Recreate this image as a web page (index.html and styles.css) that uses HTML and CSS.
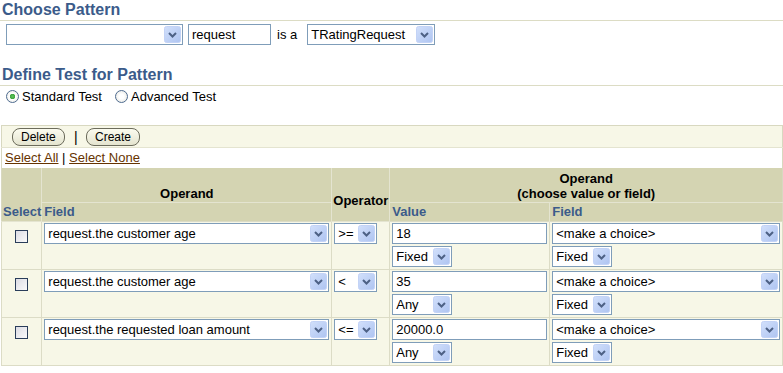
FILE: index.html
```html
<!DOCTYPE html>
<html lang="en">
<head>
    <meta charset="UTF-8">
    <title>Choose Pattern</title>
    <link rel="stylesheet" href="styles.css">
</head>
<body>
    <h2 class="section-title">Choose Pattern</h2>
    <div class="pattern-row">
        <select class="ctl sel-pattern"><option></option></select>
        <input class="ctl inp-var" type="text" value="request">
        <span class="is-a">is a</span>
        <select class="ctl sel-type"><option>TRatingRequest</option></select>
    </div>

    <h2 class="section-title second">Define Test for Pattern</h2>
    <div class="radio-row">
        <label><input type="radio" name="test" checked> Standard Test</label>
        <label><input type="radio" name="test"> Advanced Test</label>
    </div>

    <table class="test-table">
        <tr class="btn-row">
            <td colspan="5">
                <button class="pill">Delete</button>
                <span class="sep">|</span>
                <button class="pill">Create</button>
            </td>
        </tr>
        <tr class="link-row">
            <td colspan="5"><a href="#">Select All</a> | <a href="#">Select None</a></td>
        </tr>
        <tr class="head-top">
            <th rowspan="2" class="col-select blue bottom">Select</th>
            <th class="col-field">Operand</th>
            <th rowspan="2" class="col-op">Operator</th>
            <th colspan="2">Operand<br>(choose value or field)</th>
        </tr>
        <tr class="head-sub">
            <th class="blue left">Field</th>
            <th class="blue left col-value">Value</th>
            <th class="blue left">Field</th>
        </tr>

        <tr class="data-row">
            <td class="center"><input type="checkbox" class="chk"></td>
            <td><select class="ctl w-field"><option>request.the customer age</option></select></td>
            <td><select class="ctl w-op"><option>&gt;=</option></select></td>
            <td>
                <input class="ctl w-value" type="text" value="18">
                <select class="ctl w-kind"><option>Fixed</option></select>
            </td>
            <td>
                <select class="ctl w-choice"><option>&lt;make a choice&gt;</option></select>
                <select class="ctl w-kind"><option>Fixed</option></select>
            </td>
        </tr>
        <tr class="data-row">
            <td class="center"><input type="checkbox" class="chk"></td>
            <td><select class="ctl w-field"><option>request.the customer age</option></select></td>
            <td><select class="ctl w-op"><option>&lt;</option></select></td>
            <td>
                <input class="ctl w-value" type="text" value="35">
                <select class="ctl w-kind"><option>Any</option></select>
            </td>
            <td>
                <select class="ctl w-choice"><option>&lt;make a choice&gt;</option></select>
                <select class="ctl w-kind"><option>Fixed</option></select>
            </td>
        </tr>
        <tr class="data-row">
            <td class="center"><input type="checkbox" class="chk"></td>
            <td><select class="ctl w-field"><option>request.the requested loan amount</option></select></td>
            <td><select class="ctl w-op"><option>&lt;=</option></select></td>
            <td>
                <input class="ctl w-value" type="text" value="20000.0">
                <select class="ctl w-kind"><option>Any</option></select>
            </td>
            <td>
                <select class="ctl w-choice"><option>&lt;make a choice&gt;</option></select>
                <select class="ctl w-kind"><option>Fixed</option></select>
            </td>
        </tr>
    </table>
</body>
</html>
```

FILE: styles.css
```css
/* Base */
body {
    margin: 0;
    padding: 0;
    font-family: "Liberation Sans", Arial, sans-serif;
    font-size: 12px;
    color: #000;
    background: #fff;
}

/* Section titles */
.section-title {
    margin: 0;
    padding: 0 0 1px 2px;
    font-size: 16px;
    line-height: 19px;
    font-weight: bold;
    color: #3b5b8a;
    border-bottom: 1px solid #dcdcc4;
}

.section-title.second {
    margin-top: 20px;
}

/* Form controls */
.ctl {
    box-sizing: border-box;
    height: 21px;
    margin: 0;
    border: 1px solid #7f9db9;
    background-color: #fff;
    font-family: "Liberation Sans", Arial, sans-serif;
    font-size: 13px;
    color: #000;
    padding: 0 3px;
    vertical-align: middle;
}

select.ctl {
    appearance: none;
    -webkit-appearance: none;
    padding-right: 20px;
    background-image: url("data:image/svg+xml,%3Csvg xmlns='http://www.w3.org/2000/svg' width='17' height='17'%3E%3Cdefs%3E%3ClinearGradient id='g' x1='0' y1='0' x2='1' y2='1'%3E%3Cstop offset='0' stop-color='%23d2e0fb'/%3E%3Cstop offset='1' stop-color='%23aec4f1'/%3E%3C/linearGradient%3E%3C/defs%3E%3Crect x='0.5' y='0.5' width='16' height='16' rx='2' fill='url(%23g)' stroke='%23c3d3f6'/%3E%3Cpath d='M5 7l3.5 3.5L12 7' fill='none' stroke='%234d6185' stroke-width='2'/%3E%3C/svg%3E");
    background-repeat: no-repeat;
    background-position: right 1px center;
}

/* Choose pattern row */
.pattern-row {
    display: flex;
    align-items: center;
    padding: 3px 0 0 6px;
}

.sel-pattern { width: 177px; }
.inp-var { width: 83px; margin-left: 5px; }
.is-a { margin: 0 10px 0 6px; font-size: 13px; }
.sel-type { width: 128px; }

/* Radios */
.radio-row {
    display: flex;
    gap: 13px;
    padding: 3px 0 0 6px;
    font-size: 13px;
}

.radio-row label {
    display: flex;
    align-items: center;
    gap: 3px;
}

.radio-row input {
    appearance: none;
    -webkit-appearance: none;
    width: 13px;
    height: 13px;
    margin: 0;
    border: 1px solid #4e6b8f;
    border-radius: 50%;
    background: radial-gradient(circle, #fff 30%, #e2e2dc 100%);
}

.radio-row input:checked {
    background: radial-gradient(circle, #5cc35c 0, #3fa53f 2.5px, #fff 3px, #e6e6e0 100%);
}

/* Table */
.test-table {
    width: 781px;
    margin: 21px 0 0 1px;
    border-collapse: collapse;
    border: 1px solid #d8d8c0;
}

.test-table td,
.test-table th {
    padding: 0;
}

.btn-row {
    height: 22px;
}

.btn-row td {
    padding-left: 10px;
    background: #f7f7e7;
    border-bottom: 1px solid #e4e4d0;
}

.pill {
    height: 18px;
    padding: 0 8px;
    border: 1px solid #6b6b5b;
    border-radius: 8px;
    background: linear-gradient(#fbfbef, #e4e4cf);
    font-family: "Liberation Sans", Arial, sans-serif;
    font-size: 12px;
    color: #000;
    vertical-align: middle;
}

.sep {
    margin: 0 5px 0 6px;
    font-size: 14px;
    vertical-align: middle;
}

.link-row {
    height: 20px;
}

.link-row td {
    padding-left: 3px;
    background: #fff;
    font-size: 13px;
    line-height: 15px;
}

.link-row a {
    color: #663300;
}

/* Header */
.test-table th {
    background: #d4d4b2;
    font-size: 13px;
    font-weight: bold;
    color: #000;
    border-left: 1px solid #e4e4d0;
}

.head-top {
    height: 35px;
}

.head-sub {
    height: 19px;
}

.head-top th {
    line-height: 15px;
    vertical-align: bottom;
    padding-bottom: 1px;
    border-bottom: 1px solid #e4e4d0;
}

.head-top th.col-op {
    vertical-align: middle;
    padding: 14px 1px 0 1px;
    line-height: 16px;
}

.head-top th.col-select {
    border-left: none;
    padding: 0 0 2px 1px;
    text-align: left;
}

.head-sub th {
    padding-left: 2px;
    line-height: 16px;
}

.test-table th.blue {
    color: #3b5b8a;
}

.test-table th.left {
    text-align: left;
}

.test-table th.bottom {
    vertical-align: bottom;
}

.col-select { width: 41px; }
.col-field { width: 287px; }
.col-op { width: 58px; }
.test-table th.col-value { width: 155px; }

/* Data rows */
.data-row {
    height: 48px;
}

.data-row td {
    padding: 1px 2px 2px 2px;
    background: #f7f7e7;
    border: 1px solid #dcdcc6;
    vertical-align: top;
}

.data-row td.center {
    text-align: center;
    padding-top: 8px;
    line-height: 0;
}

.data-row td > .ctl {
    display: block;
}

.data-row td > .ctl + .ctl {
    margin-top: 2px;
}

.w-field { width: 285px; }
.w-op { width: 43px; }
.w-value { width: 155px; }
.w-choice { width: 228px; }
.w-kind { width: 60px; }

.chk {
    appearance: none;
    -webkit-appearance: none;
    width: 13px;
    height: 13px;
    margin: 0;
    border: 1px solid #2a3d5a;
    background: linear-gradient(135deg, #dcdce4, #fafafa);
}
```
